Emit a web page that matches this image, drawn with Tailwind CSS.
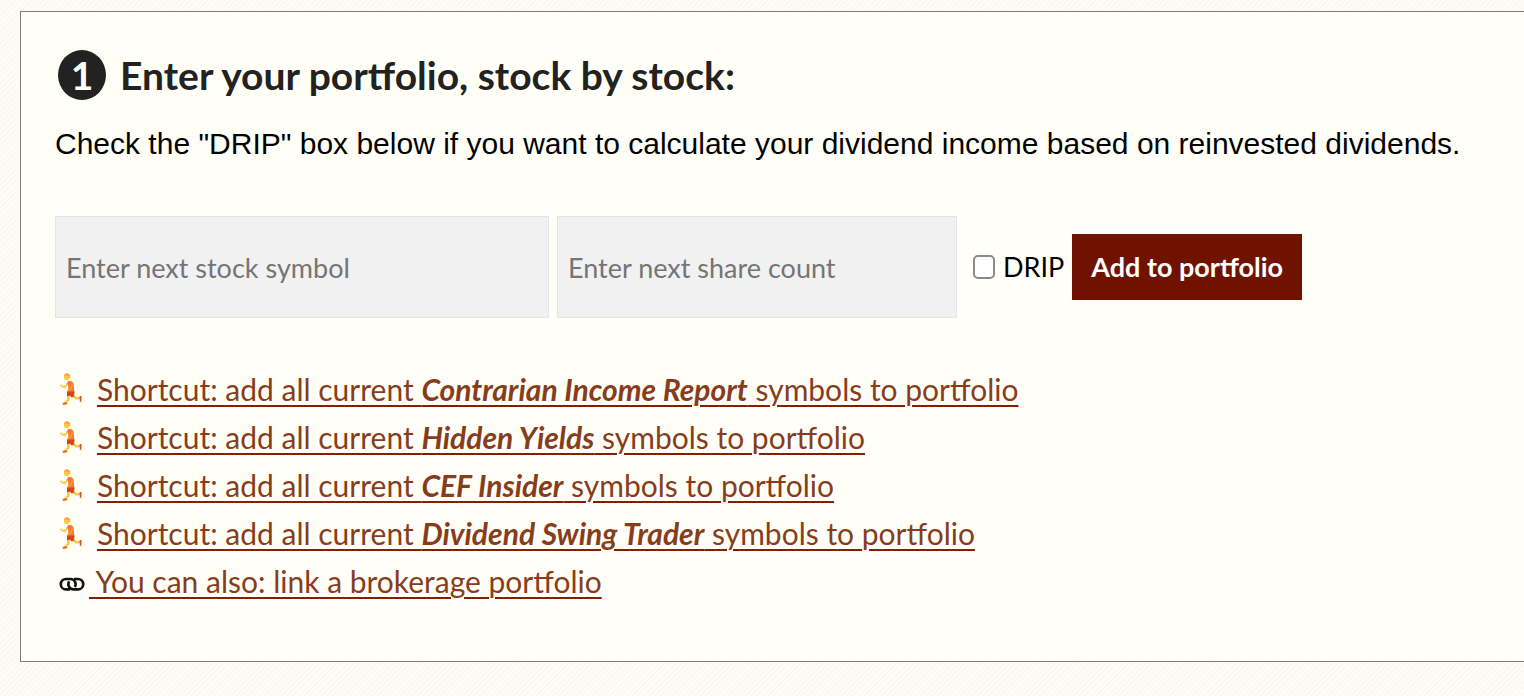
<!DOCTYPE html>
<html lang="en">

<head>
  <meta charset="UTF-8" />
  <meta name="viewport" content="width=device-width, initial-scale=1.0" />
  <title>Portfolio Income Calculator</title>
  <script src="https://cdn.jsdelivr.net/npm/@tailwindcss/browser@4"></script>
</head>

<body class="bg-[#fdfdf5] bg-[repeating-linear-gradient(135deg,#fdfdf5_0px,#fdfdf5_2px,#f6f6ee_3px,#fdfdf5_4px)] font-['Lato',sans-serif] text-black overflow-x-hidden">

  <!-- Icons -->
  <svg class="hidden">
    <symbol id="runner" viewBox="8 4 24 32">
      <path d="M17 14 L13.5 18.5 L10 16.5" fill="none" stroke="#ffc83d" stroke-width="2" stroke-linecap="round" stroke-linejoin="round" />
      <path d="M21 26 L25.5 29.5 L29 29" fill="none" stroke="#ffc83d" stroke-width="2.6" stroke-linejoin="round" />
      <path d="M17.5 26 L17.2 31 L14.5 34" fill="none" stroke="#ffc83d" stroke-width="2.6" stroke-linejoin="round" />
      <path d="M16 13 Q20 10.5 22.5 14 L23.5 24 L16 24 L17.5 18 Z" fill="#f7772f" />
      <path d="M16 22.5 L23.5 22.5 L23 27.5 L20.5 28.5 L19 26.5 L16 27.5 Z" fill="#d3441c" />
      <path d="M21 15 L20.5 19.5 L17.5 21.5" fill="none" stroke="#f99a3a" stroke-width="1.6" stroke-linecap="round" />
      <circle cx="15.8" cy="8" r="3" fill="#ffc83d" />
      <path d="M12.8 6.8 Q13.5 4 16.2 4.2 Q19.6 4.6 19.2 9 L17.5 8 L16.6 6.6 Z" fill="#ff9f2e" />
      <path d="M28.6 27 L30.6 27 L30.4 33 L28.8 32.5 Z" fill="#d8552c" />
      <path d="M11 35.6 Q11 34.2 14 33.2 L16.5 34.4 L15.5 35.4 Z" fill="#d8552c" />
    </symbol>
    <symbol id="chain" viewBox="0 0 26 16">
      <path d="M11 13.4 H7 A5.2 5.2 0 0 1 7 3 H11.5 A5.2 5.2 0 0 1 15.8 11" fill="none" stroke="#111" stroke-width="2.6" />
      <path d="M15 3 H19 A5.2 5.2 0 0 1 19 13.4 H14.5 A5.2 5.2 0 0 1 10.2 5.4" fill="none" stroke="#111" stroke-width="2.6" />
    </symbol>
  </svg>

  <!-- Portfolio panel -->
  <main class="mt-[11px] ml-5 pt-[35px] pb-14 pl-[34px] border border-r-0 border-[#7c7c7c] bg-[#fffff7]">

    <h2 class="flex items-center gap-[14px] pl-[3px] text-[39px] leading-14 font-bold text-[#222]">
      <span class="flex items-center justify-center w-12 h-[50px] rounded-[50%] bg-[#222] text-[#fffff7]">1</span>
      Enter your portfolio, stock by stock:
    </h2>

    <p class="mt-[21px] text-[30px] leading-10 font-['Liberation_Sans',sans-serif]">Check the "DRIP" box below if you want to calculate your dividend income based on reinvested dividends.</p>

    <form class="mt-[52px] flex items-center gap-2 text-[27px]">
      <input type="text" aria-label="Stock symbol" placeholder="Enter next stock symbol" class="w-[494px] h-[102px] px-[10px] border border-[#e4e4e4] bg-[#f1f1f1] placeholder:text-[#757575]" />
      <input type="text" aria-label="Share count" placeholder="Enter next share count" class="w-[400px] h-[102px] px-[10px] border border-[#e4e4e4] bg-[#f1f1f1] placeholder:text-[#757575]" />
      <label class="ml-2 flex items-center gap-2">
        <input type="checkbox" class="appearance-none w-[22px] h-6 border-2 border-[#8a8a8a] rounded-[5px] bg-white checked:bg-[#701200]" />
        DRIP
      </label>
      <button type="button" class="w-[230px] h-[66px] bg-[#701200] hover:bg-[#8a1a04] text-white font-bold">Add to portfolio</button>
    </form>

    <ul class="mt-[47px] text-[30px] leading-12 text-[#873d1b]">
      <li class="flex items-center pl-1">
        <svg class="w-6 h-8 mr-[14px]"><use href="#runner" /></svg>
        <a href="#" class="underline decoration-2 underline-offset-4 decoration-[#7d2305]">Shortcut: add all current <b><i>Contrarian Income Report</i></b> symbols to portfolio</a>
      </li>
      <li class="flex items-center pl-1">
        <svg class="w-6 h-8 mr-[14px]"><use href="#runner" /></svg>
        <a href="#" class="underline decoration-2 underline-offset-4 decoration-[#7d2305]">Shortcut: add all current <b><i>Hidden Yields</i></b> symbols to portfolio</a>
      </li>
      <li class="flex items-center pl-1">
        <svg class="w-6 h-8 mr-[14px]"><use href="#runner" /></svg>
        <a href="#" class="underline decoration-2 underline-offset-4 decoration-[#7d2305]">Shortcut: add all current <b><i>CEF Insider</i></b> symbols to portfolio</a>
      </li>
      <li class="flex items-center pl-1">
        <svg class="w-6 h-8 mr-[14px]"><use href="#runner" /></svg>
        <a href="#" class="underline decoration-2 underline-offset-4 decoration-[#7d2305]">Shortcut: add all current <b><i>Dividend Swing Trader</i></b> symbols to portfolio</a>
      </li>
      <li class="flex items-center pl-1">
        <svg class="w-[26px] h-4 mt-1.5 mr-1"><use href="#chain" /></svg>
        <a href="#" class="underline decoration-2 underline-offset-4 decoration-[#7d2305]">&nbsp;You can also: link a brokerage portfolio</a>
      </li>
    </ul>
  </main>

</body>

</html>
